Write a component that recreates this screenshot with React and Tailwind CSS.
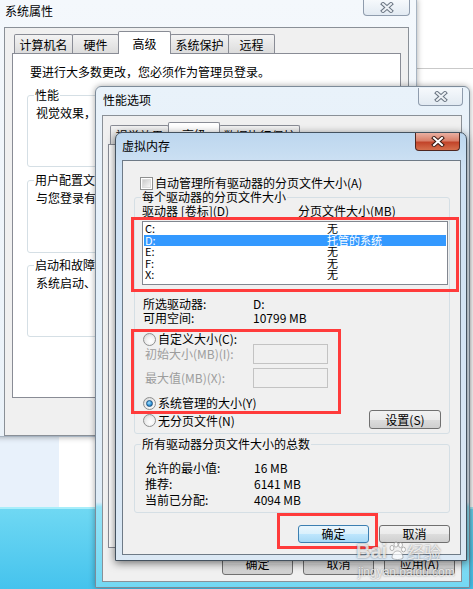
import clsx from 'clsx'

const CloseButton = ({ active, className }) => (
  <div
    className={clsx(
      'flex shrink-0 items-center justify-center rounded-b-[4px] border border-t-0',
      active
        ? 'border-[#4e2620] bg-[linear-gradient(to_bottom,#eab0a2_0%,#d9806a_45%,#c2442a_55%,#d56f4c_100%)]'
        : 'border-[#8f9cad] bg-[linear-gradient(to_bottom,#f6f9fc,#e2eaf2)]',
      className
    )}
  >
    <svg width="14" height="11" viewBox="0 0 14 11">
      <path d="M3 2 L11 9 M11 2 L3 9" stroke={active ? '#3b1b14' : '#6b7683'} strokeWidth="4" strokeLinecap="square" />
      <path d="M3 2 L11 9 M11 2 L3 9" stroke={active ? '#ffffff' : '#edf1f5'} strokeWidth="2" strokeLinecap="square" />
    </svg>
  </div>
)

const Btn = ({ children, def, className }) => (
  <div
    className={clsx(
      'flex shrink-0 items-center justify-center rounded-[3px] border',
      def
        ? 'border-[#3c7fb1] bg-[linear-gradient(to_bottom,#eaf6fd_0%,#d9f0fc_50%,#bee6fd_50%,#a7d9f5_100%)]'
        : 'border-[#707070] bg-[linear-gradient(to_bottom,#f2f2f2_0%,#ebebeb_50%,#dddddd_50%,#cfcfcf_100%)]',
      className
    )}
  >
    {children}
  </div>
)

const Tab = ({ children, w, active }) => (
  <div
    className={clsx(
      'flex shrink-0 justify-center rounded-t-[2px] border border-b-0 border-[#898c95] -ml-px first:ml-0',
      active
        ? 'relative z-10 -mb-px h-[23px] bg-white pt-[5px]'
        : 'h-[19px] bg-[linear-gradient(to_bottom,#f3f3f3,#dcdcdc)] pt-[3px]',
      w
    )}
  >
    {children}
  </div>
)

const Radio = ({ checked }) => (
  <span className="flex h-[13px] w-[13px] shrink-0 items-center justify-center rounded-full border border-[#8e8f8f] bg-[radial-gradient(circle_at_60%_65%,#ffffff_0%,#f0f0f0_45%,#cdcdcd_100%)]">
    {checked && (
      <span className="h-[7px] w-[7px] rounded-full border border-[#1c5180] bg-[radial-gradient(circle_at_40%_35%,#a9e2ff_0%,#3b9ee0_50%,#0d5a9a_100%)]" />
    )}
  </span>
)

const Checkbox = () => (
  <span className="flex h-[13px] w-[13px] shrink-0 items-center justify-center border border-[#8e8f8f] bg-white">
    <span className="h-[9px] w-[9px] border border-[#dcdcdc] bg-[linear-gradient(135deg,#cbcbcb,#f6f6f6)]" />
  </span>
)

// group box: the caption sits on the top border line, its background hides the line
const Group = ({ label, labelClass, className, children }) => (
  <div className={clsx('rounded-[3px] border border-[#d5dfe5]', className)}>
    <div className={clsx('-mt-[8px] w-fit px-px leading-[14px]', labelClass)}>{label}</div>
    {children}
  </div>
)

const drives = [
  { d: 'C:', size: '无' },
  { d: 'D:', size: '托管的系统', sel: true },
  { d: 'E:', size: '无' },
  { d: 'F:', size: '无' },
  { d: 'X:', size: '无' },
]

const SystemProps = () => (
  <div className="absolute left-[-4px] top-[-1px] z-[1] flex h-[438px] w-[421px] flex-col border border-[#a7b4c2] bg-[linear-gradient(to_bottom,#f4f8fc,#eaf2f9)] shadow-[0_0_6px_rgba(0,0,0,0.35)]">
    <div className="flex h-[27px] shrink-0 items-start justify-between pl-[8px] pr-[6px]">
      <span className="mt-[4px]">系统属性</span>
      <CloseButton className="h-[16px] w-[47px]" />
    </div>
    <div className="mx-[7px] flex flex-1 flex-col border border-[#8a9097] bg-[#f0f0f0] px-[7px] pt-[3px]">
      <div className="ml-[2px] flex h-[22px] items-end">
        <Tab w="w-[59px]">计算机名</Tab>
        <Tab w="w-[47px]">硬件</Tab>
        <Tab w="w-[53px]" active>高级</Tab>
        <Tab w="w-[59px]">系统保护</Tab>
        <Tab w="w-[47px]">远程</Tab>
      </div>
      <div className="flex h-[345px] flex-col border border-[#898c95] bg-white pt-[11px]">
        <div className="flex h-[14px] items-center pl-[17px]">要进行大多数更改，您必须作为管理员登录。</div>
        <Group label="性能" labelClass="-ml-[2px] bg-white" className="mx-[14px] mt-[16px] h-[72px] pl-[8px]">
          <div className="mt-[4px]">视觉效果，处理器计划，内存使用，以及虚拟内存</div>
        </Group>
        <Group label="用户配置文件" labelClass="-ml-[2px] bg-white" className="mx-[14px] mt-[13px] h-[73px] pl-[8px]">
          <div className="mt-[4px]">与您登录有关的桌面设置</div>
        </Group>
        <Group label="启动和故障恢复" labelClass="-ml-[2px] bg-white" className="mx-[14px] mt-[12px] h-[72px] pl-[8px]">
          <div className="mt-[4px]">系统启动、系统失败和调试信息</div>
        </Group>
      </div>
      <div className="mt-[6px] flex justify-end gap-[8px]">
        <Btn className="h-[22px] w-[71px]">确定</Btn>
        <Btn className="h-[22px] w-[71px]">取消</Btn>
        <Btn className="h-[22px] w-[71px]">应用(A)</Btn>
      </div>
    </div>
  </div>
)

const PerfOptions = () => (
  <div className="absolute left-[95px] top-[86px] z-[2] flex h-[502px] w-[375px] flex-col rounded-t-[6px] border border-[#7d8b99] bg-[linear-gradient(to_bottom,#e9f2fa_0%,#dfecf7_83%,#93e2f6_84%,#74d8f3_100%)] shadow-[0_0_6px_rgba(0,0,0,0.35)]">
    <div className="flex h-[28px] shrink-0 items-start justify-between pl-[7px] pr-[6px]">
      <span className="mt-[6px]">性能选项</span>
      <CloseButton className="mt-px h-[18px] w-[45px]" />
    </div>
    <div className="mb-[5px] ml-[6px] mr-[7px] flex flex-1 flex-col border border-[#8a9097] bg-[#f0f0f0] px-[5px] pb-[6px] pt-[6px]">
      <div className="ml-[2px] flex h-[22px] items-end">
        <Tab w="w-[59px]">视觉效果</Tab>
        <Tab w="w-[52px]" active>高级</Tab>
        <Tab w="w-[81px]">数据执行保护</Tab>
      </div>
      <div className="flex-1 border border-[#898c95] bg-white" />
      <div className="mt-[5px] flex justify-end gap-[10px] pr-px">
        <Btn className="h-[22px] w-[71px]">确定</Btn>
        <Btn className="h-[22px] w-[71px]">取消</Btn>
        <Btn className="h-[22px] w-[71px]">应用(A)</Btn>
      </div>
    </div>
  </div>
)

const VirtualMemory = () => (
  <div className="absolute left-[115px] top-[132px] z-[3] flex h-[429px] w-[352px] flex-col rounded-t-[7px] border border-[#44525f] bg-[linear-gradient(to_bottom,#bcd6ee_0%,#cfe2f4_8%,#dbe8f4_100%)] shadow-[0_2px_8px_rgba(0,0,0,0.55)]">
    <div className="flex h-[27px] shrink-0 items-start justify-between pl-[6px] pr-[6px]">
      <span className="mt-[6px]">虚拟内存</span>
      <CloseButton active className="h-[18px] w-[45px]" />
    </div>
    <div className="mb-[5px] ml-[6px] mr-[5px] flex flex-1 flex-col border border-[#6e7a86] bg-[#f0f0f0] pl-[11px] pr-[10px] pt-[15px]">
      <div className="flex h-[14px] items-center pl-[6px]">
        <Checkbox />
        <span className="ml-[2px]">自动管理所有驱动器的分页文件大小(A)</span>
      </div>

      <Group label="每个驱动器的分页文件大小" labelClass="-ml-px bg-[#f0f0f0]" className="mt-[7px] pb-[4px] pl-[7px] pr-px">
        <div className="flex h-[14px] items-center">
          <span className="w-[156px]">驱动器 [卷标](D)</span>
          <span>分页文件大小(MB)</span>
        </div>
        <div className="mt-[3px] h-[64px] border border-[#828790] bg-white px-px pt-px text-[11px]">
          {drives.map((r) => (
            <div
              key={r.d}
              className={clsx('flex h-[11.5px] items-center pl-px leading-[11.5px]', r.sel && 'bg-[#3399ff] text-white')}
            >
              <span className="w-[182px]">{r.d}</span>
              <span>{r.size}</span>
            </div>
          ))}
        </div>

        <div className="mt-[12px] flex h-[14px] items-center pl-px">
          <span className="w-[110px]">所选驱动器:</span>
          <span>D:</span>
        </div>
        <div className="flex h-[14px] items-center pl-px">
          <span className="w-[110px]">可用空间:</span>
          <span>10799 MB</span>
        </div>

        <div className="mt-[8px] flex h-[12px] items-center pl-px">
          <Radio />
          <span className="ml-[2px]">自定义大小(C):</span>
        </div>
        <div className="-mt-px flex h-[20px] items-center pl-[3px] text-[#9d9d9d]">
          <span className="w-[108px]">初始大小(MB)(I):</span>
          <span className="h-[20px] w-[75px] border border-[#c3c3c3] bg-[#f0f0f0]" />
        </div>
        <div className="mt-[4px] flex h-[20px] items-center pl-[3px] text-[#9d9d9d]">
          <span className="w-[108px]">最大值(MB)(X):</span>
          <span className="h-[20px] w-[75px] border border-[#c3c3c3] bg-[#f0f0f0]" />
        </div>
        <div className="mt-[8px] flex h-[14px] items-center pl-px">
          <Radio checked />
          <span className="ml-[2px]">系统管理的大小(Y)</span>
        </div>
        <div className="flex h-[19px] items-center justify-between pl-px">
          <div className="flex items-center pt-[2px]">
            <Radio />
            <span className="ml-[2px]">无分页文件(N)</span>
          </div>
          <Btn className="mr-[7px] h-[19px] w-[72px]">设置(S)</Btn>
        </div>
      </Group>

      <Group label="所有驱动器分页文件大小的总数" labelClass="-ml-px bg-[#f0f0f0]" className="mt-[10px] pb-[5px] pl-[7px]">
        <div className="mt-[10px] flex h-[14px] items-center pl-[3px]">
          <span className="w-[109px]">允许的最小值:</span>
          <span>16 MB</span>
        </div>
        <div className="mt-[2px] flex h-[14px] items-center pl-[3px]">
          <span className="w-[109px]">推荐:</span>
          <span>6141 MB</span>
        </div>
        <div className="mt-[2px] flex h-[14px] items-center pl-[3px]">
          <span className="w-[109px]">当前已分配:</span>
          <span>4094 MB</span>
        </div>
      </Group>

      <div className="mt-[12px] flex justify-end gap-[10px]">
        <Btn def className="h-[18px] w-[71px]">确定</Btn>
        <Btn className="h-[18px] w-[71px]">取消</Btn>
      </div>
    </div>
  </div>
)

export default function App() {
  return (
    <div className="relative h-[589px] w-[473px] overflow-hidden bg-white font-['Noto_Sans_CJK_SC','Noto_Sans',sans-serif] text-[12px] leading-[14px] text-black">
      {/* desktop behind the windows */}
      <div className="absolute left-[417px] top-[68px] h-px w-[56px] bg-[#c9c9c9]" />
      <div className="absolute left-0 top-[437px] h-[70px] w-[59px] bg-[#e8f1fb]" />
      <div className="absolute left-0 top-[507px] h-[82px] w-full border-t-2 border-[#a8eefa] bg-[linear-gradient(to_bottom,#6fd8f3,#45c3ed)]" />

      <SystemProps />
      <PerfOptions />
      <VirtualMemory />

      {/* red annotation boxes */}
      <div className="pointer-events-none absolute left-[131px] top-[217px] z-[4] h-[75px] w-[328px] border-[3px] border-[#ff3b3b]" />
      <div className="pointer-events-none absolute left-[131px] top-[329px] z-[4] h-[85px] w-[210px] border-[3px] border-[#ff3b3b]" />
      <div className="pointer-events-none absolute left-[277px] top-[513px] z-[4] h-[36px] w-[101px] border-[3px] border-[#ff3b3b]" />

      {/* watermark */}
      <div className="pointer-events-none absolute left-[356px] top-[540px] z-[5] flex items-end text-white/75 [text-shadow:0_0_2px_rgba(0,0,0,0.5)]">
        <span className="font-['Liberation_Sans'] text-[20px] font-bold leading-[22px]">Bai</span>
        <svg width="20" height="20" viewBox="0 0 20 20" className="mb-[1px] opacity-75">
          <g fill="#ffffff" stroke="#8a8a8a" strokeWidth="0.8">
            <ellipse cx="5" cy="7" rx="2" ry="2.6" />
            <ellipse cx="9" cy="3.5" rx="2" ry="2.6" />
            <ellipse cx="13.5" cy="4" rx="2" ry="2.6" />
            <ellipse cx="16.5" cy="8.5" rx="2" ry="2.4" />
            <path d="M5 17 C5 12 8 10 10.5 10 C13 10 16 12 16 17 C14 19 7 19 5 17 Z" />
          </g>
        </svg>
        <span className="text-[17px] leading-[20px]">经验</span>
      </div>
      <div className="pointer-events-none absolute left-[358px] top-[565px] z-[5] font-['Liberation_Sans'] text-[12px] text-white/75 [text-shadow:0_0_2px_rgba(0,0,0,0.5)]">
        jingyan.baidu.com
      </div>
    </div>
  )
}
